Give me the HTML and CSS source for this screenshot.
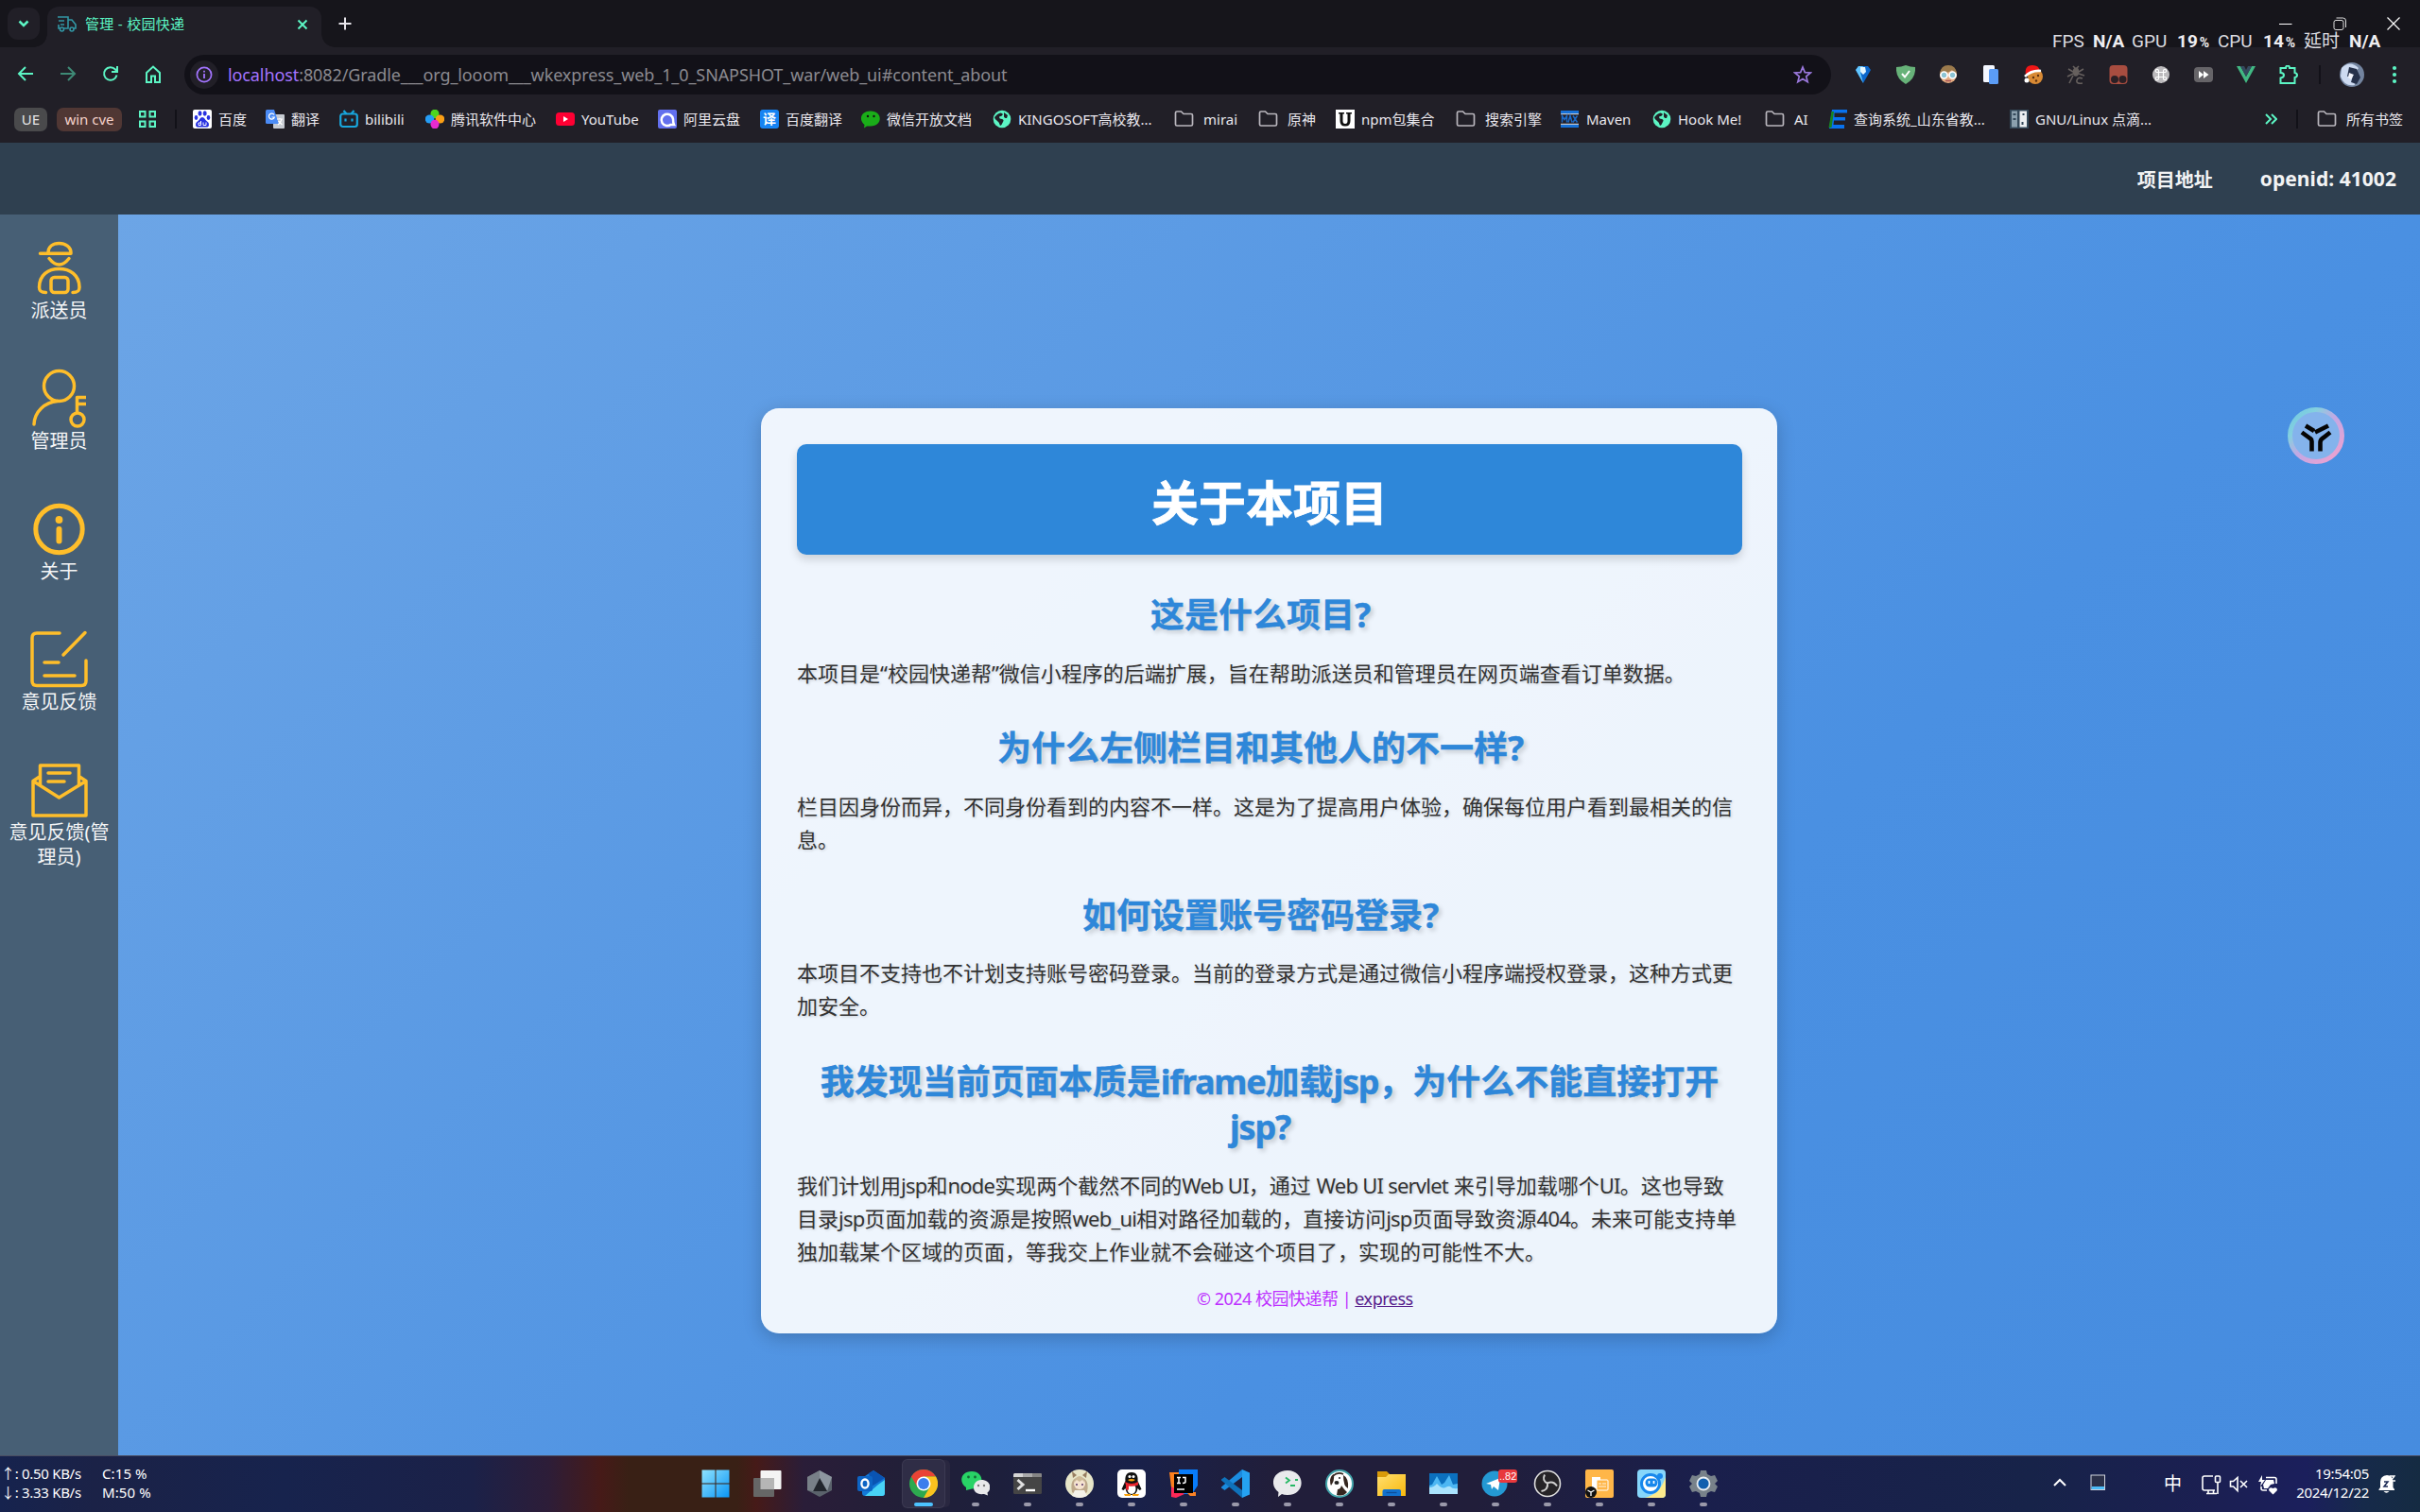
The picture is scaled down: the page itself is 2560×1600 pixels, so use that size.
FILE: index.html
```html
<!DOCTYPE html>
<html lang="zh-CN">
<head>
<meta charset="utf-8">
<title>管理 - 校园快递</title>
<link rel="stylesheet" href="styles.css">
</head>
<body>
<svg class="defs" width="0" height="0">
  <defs>
    <symbol id="folder" viewBox="0 0 21 20"><path d="M1.5 3.5q0-1.5 1.500-1.500h4.500l2.500 2.500h8q1.500 0 1.500 1.500v9.500q0 1.500-1.500 1.500h-15q-1.500 0-1.500-1.500z" fill="none" stroke="#b9b6bd" stroke-width="1.700"/></symbol>
    <symbol id="globe" viewBox="0 0 20 20"><circle cx="10" cy="10" r="9.300" fill="#5cf5c4"/><path d="M5 5q4-3 6 0-1 2-4 2.500 0 2.500 3 2.500 2.500 1 1 3-1 3-3 4-1-4-3-5-3-2-3-4zM12 3l4 3-1 3q-3 0-3-2z" fill="#211f27"/></symbol>
    <linearGradient id="winG" x1="0" y1="0" x2="1" y2="1"><stop offset="0" stop-color="#8fe3ff"/><stop offset="1" stop-color="#0a95f5"/></linearGradient>
    <linearGradient id="ringG" x1="0" y1="0" x2="1" y2="1"><stop offset="0" stop-color="#6fc8e4"/><stop offset=".25" stop-color="#84d0df"/><stop offset=".5" stop-color="#c2a8e4"/><stop offset="1" stop-color="#f5a0cc"/></linearGradient>
    <linearGradient id="foldG" x1="0" y1="0" x2="1" y2="1"><stop offset="0" stop-color="#ffdf70"/><stop offset="1" stop-color="#f8b80c"/></linearGradient>
  </defs>
</svg>

<header class="chrome">
  <div class="tabstrip">
    <button class="tab-search"><svg width="14" height="14" viewBox="0 0 14 14"><path d="M2.500 4.500l4.500 4.500 4.500-4.500" class="mint-line thick"/></svg></button>
    <div class="tab">
      <svg width="21" height="20" viewBox="0 0 21 20" fill="none" stroke="#3297a5" stroke-width="1.600"><path d="M1 2h11v12H7M2 6h6M4 10h4M12 5h4l4 5v4h-2M2 10v4h2"/><circle cx="5.500" cy="15" r="2"/><circle cx="16" cy="15" r="2"/></svg>
      <span class="tab-title">管理 - 校园快递</span>
      <svg class="tab-x" width="12" height="12" viewBox="0 0 12 12"><path d="M1.500 1.500l9 9M10.500 1.500l-9 9" class="mint-line"/></svg>
    </div>
    <svg class="plus" width="14" height="14" viewBox="0 0 14 14"><path d="M7 .5v13M.5 7h13" stroke="#e8e6ec" stroke-width="2"/></svg>
    <div class="winbtns">
      <svg width="14" height="14" viewBox="0 0 14 14"><path d="M0 7.500h13.500" stroke="#fff"/></svg>
      <svg width="14" height="14" viewBox="0 0 14 14" fill="none" stroke="#ddd"><rect x="1" y="3.500" width="10" height="10" rx="2"/><path d="M3.500 1h7q3 0 3 3v7"/></svg>
      <svg width="14" height="14" viewBox="0 0 14 14"><path d="M.5.5l13 13M13.500.5l-13 13" stroke="#fff" stroke-width="1.200"/></svg>
    </div>
  </div>
  <div class="perf"><span>FPS</span><b>N/A</b><span>GPU</span><b>19<i>%</i></b><span>CPU</span><b>14<i>%</i></b><span>延时</span><b>N/A</b></div>

  <div class="toolbar">
    <div class="nav">
      <svg width="18" height="18" viewBox="0 0 18 18"><path d="M17 9H2M9 2L2 9l7 7" class="mint-line"/></svg>
      <svg class="dim" width="18" height="18" viewBox="0 0 18 18"><path d="M1 9h15M9 2l7 7-7 7" class="mint-line"/></svg>
      <svg width="18" height="18" viewBox="0 0 18 18"><path d="M15.500 10.500A6.800 6.800 0 1 1 14 4.500L15.800 6.500M16 1v6h-6" class="mint-line"/></svg>
      <svg width="18" height="20" viewBox="0 0 18 20"><path d="M2 8l7-6.500L16 8v10h-5v-6.500H7V18H2z" class="mint-line"/></svg>
    </div>
    <div class="omnibox">
      <span class="info"><svg width="18" height="18" viewBox="0 0 18 18"><circle cx="9" cy="9" r="7.600" fill="none" stroke="#a374ff" stroke-width="1.700"/><path d="M9 8v5M9 4.800v1.700" stroke="#a374ff" stroke-width="1.800"/></svg></span>
      <span class="url"><em>localhost</em>:8082/Gradle___org_looom___wkexpress_web_1_0_SNAPSHOT_war/web_ui#content_about</span>
      <svg width="20" height="20" viewBox="0 0 20 20"><path d="M10 2l2.300 5.600 6 .4-4.600 3.900 1.500 5.900L10 14.600l-5.200 3.200 1.500-5.900L1.700 8l6-.4z" fill="none" stroke="#9a78dc" stroke-width="1.700"/></svg>
    </div>
    <div class="exts">
      <svg viewBox="0 0 20 20"><path d="M2 5l3-4h10l3 4-8 14z" fill="#0b67cc"/><path d="M2 5l3-4h5l-3 6 3 12z" fill="#62c6ff"/><path d="M7 2h5l1 5-3 3-3-3z" fill="#e5f7ff"/></svg>
      <svg viewBox="0 0 20 20"><path d="M0 2q5 0 10-2 5 2 10 2 1 12-10 18Q-1 14 0 2z" fill="#67b279"/><path d="M6 9l3 3.500L14 6" fill="none" stroke="#fff" stroke-width="2"/></svg>
      <svg viewBox="0 0 20 20"><circle cx="10" cy="10" r="9" fill="#e2aa80"/><path d="M1 9Q2 0 10 0t9 9q-3-1-5-4-5 4-13 4z" fill="#9b7a4c"/><g fill="#8cc4d4" stroke="#fff" stroke-width="1.700"><circle cx="5.500" cy="10.500" r="3.500"/><circle cx="14.500" cy="10.500" r="3.500"/></g><path d="M7 16.500h6" stroke="#a55" stroke-width="1.500"/></svg>
      <svg viewBox="0 0 20 20"><rect x="2" y="0" width="12" height="18" rx="1.500" fill="#f4f7ff"/><rect x="8" y="4" width="10" height="16" rx="1.500" fill="#5b9cf5"/></svg>
      <svg viewBox="0 0 20 20"><circle cx="12" cy="12" r="8" fill="#d98a34"/><path d="M2 11Q0 0 9 0q7 0 8 6-8 0-15 5z" fill="#f01616"/><path d="M1 12Q8 5 18 6" fill="none" stroke="#fff" stroke-width="2.500"/><circle cx="3" cy="16" r="2.500" fill="#fff"/><g fill="#5c3211"><circle cx="10" cy="13" r="1.200"/><circle cx="15" cy="11" r="1.200"/><circle cx="13" cy="16.500" r="1.200"/></g></svg>
      <svg viewBox="0 0 20 20" fill="none" stroke="#66605e" stroke-width="1.600"><ellipse cx="10" cy="7" rx="2.500" ry="4" fill="#66605e"/><path d="M7 1l2 2M13 1l-2 2M2 4l5 3M18 4l-5 3M1 12l6-3M19 11l-6-2M3 19l4-8M17 14q-5-2-6 2t6 3"/></svg>
      <svg viewBox="0 0 20 20"><rect x=".5" width="19" height="20" rx="4" fill="#a84d40"/><g fill="#2b2025"><circle cx="6" cy="15" r="4"/><circle cx="14.500" cy="15" r="4"/></g></svg>
      <svg viewBox="0 0 20 20"><circle cx="10" cy="10" r="9" fill="#bcbabd"/><path d="M7.500 7.500h5v5h-5zM7.500 7.500H6a1.600 1.600 0 1 1 1.500-1.500zM12.500 7.500V6A1.600 1.600 0 1 1 14 7.500zM7.500 12.500V14A1.600 1.600 0 1 1 6 12.500zM12.500 12.500H14A1.600 1.600 0 1 1 12.500 14z" fill="none" stroke="#fff" stroke-width="1.200"/></svg>
      <svg viewBox="0 0 20 20"><rect y="2" width="20" height="16" rx="4" fill="#666468"/><path d="M5 6l5 4-5 4zM10 6l5.500 4-5.500 4z" fill="#fff"/></svg>
      <svg viewBox="0 0 20 20"><path d="M0 1h4l6 11 6-11h4L10 19z" fill="#41b883"/><path d="M4 1h4l2 4 2-4h4l-6 11z" fill="#34495e"/></svg>
      <svg viewBox="0 0 20 20"><path d="M1.500 3h5.500q0-2.500 2-2.500T11 3h5.500v5q2.500.5 2.500 2.500T16.500 13v6h-15v-5.500q3.500-.5 3.500-3T1.500 8z" class="mint-line"/></svg>
    </div>
    <i class="sep"></i>
    <svg class="avatar" width="26" height="26" viewBox="0 0 26 26"><circle cx="13" cy="13" r="13" fill="#73849f"/><path d="M2 6q9-9 18 0l-6 8 2 10q-11 2-15-9z" fill="#cddaf0"/><path d="M10 5l8 2 4 9-4 7-6-2 2-7-6 1z" fill="#26314a"/><path d="M10 11l5 2-3 5-3-2z" fill="#f2f4fb"/></svg>
    <svg class="dots" width="6" height="20" viewBox="0 0 6 20" fill="#5cf5c4"><circle cx="3" cy="3" r="2.100"/><circle cx="3" cy="10" r="2.100"/><circle cx="3" cy="17" r="2.100"/></svg>
  </div>

  <div class="bookmarks">
    <span class="chip ue">UE</span><span class="chip win">win cve</span>
    <svg class="apps" width="18" height="18" viewBox="0 0 18 18"><path d="M1 1h5.500v5.500H1zM11.500 1H17v5.500h-5.500zM1 11.500h5.500V17H1zM11.500 11.500H17V17h-5.500z" class="mint-line"/></svg>
    <i class="sep"></i>
    <div class="marks">
      <span class="bm"><svg viewBox="0 0 20 20"><rect width="20" height="20" rx="2" fill="#fff"/><g fill="#2932e1"><ellipse cx="7.500" cy="4" rx="2" ry="2.700"/><ellipse cx="12.700" cy="4" rx="2" ry="2.700"/><ellipse cx="3.500" cy="8.500" rx="1.800" ry="2.400"/><ellipse cx="16.500" cy="8.500" rx="1.800" ry="2.400"/><path d="M10 8q2 0 3.500 3 3.500 2.500 3.500 5 0 3-4 2.500H7q-4 .5-4-2.500 0-2.500 3.500-5Q8 8 10 8z"/></g><path d="M8.500 12v4.500H6v-2.500h2M11 13.500v3h3v-3" fill="none" stroke="#fff"/></svg>百度</span>
      <span class="bm"><svg viewBox="0 0 20 20"><rect x="8" y="5" width="12" height="15" rx="1" fill="#c7cbd2"/><path d="M1.500 0H9l5 15H1.500Q0 15 0 13.500v-12Q0 0 1.500 0z" fill="#4b8bf5"/><path d="M9 5.500a3 3 0 1 0 .3 2.500H6.500M12 10h6M15 9v1M17 10q-1 4-4 6M13.500 12l4 4" fill="none" stroke="#fff" stroke-width="1.200"/></svg>翻译</span>
      <span class="bm"><svg viewBox="0 0 20 20" fill="none" stroke="#18a6dc" stroke-width="2.200"><rect x="1.200" y="4.500" width="17.600" height="13.500" rx="2.500"/><path d="M4.500 1l3 3.500M15.500 1l-3 3.500M6.500 9.500v3M13.500 9.500v3"/></svg>bilibili</span>
      <span class="bm"><svg viewBox="0 0 20 20"><ellipse cx="10" cy="4.500" rx="4.500" ry="4.800" fill="#4dd61f"/><ellipse cx="4.500" cy="10" rx="4.800" ry="4.500" fill="#259df5"/><ellipse cx="15.500" cy="10" rx="4.800" ry="4.500" fill="#fb9f15"/><ellipse cx="10" cy="15.500" rx="4.500" ry="4.800" fill="#e72bd0"/></svg>腾讯软件中心</span>
      <span class="bm"><svg viewBox="0 0 20 20"><rect y="3" width="20" height="14" rx="3.500" fill="#ff0033"/><path d="M8 7l5 3-5 3z" fill="#fff"/></svg>YouTube</span>
      <span class="bm"><svg viewBox="0 0 20 20"><rect width="20" height="20" rx="2" fill="#6370ee"/><path d="M14 15.500A6.200 6.200 0 1 1 16 10q0 4 1 6h-3.500" fill="none" stroke="#fff" stroke-width="2.500"/></svg>阿里云盘</span>
      <span class="bm"><span class="tile">译</span>百度翻译</span>
      <span class="bm"><svg viewBox="0 0 20 20"><path d="M10 1.500c13 0 13 16 0 16-2 0-3 0-4 0l-3 2 .5-3.500C-3 11-.5 1.500 10 1.500z" fill="#1aad19"/><circle cx="7" cy="7" r="1.200" fill="#111"/><circle cx="13.500" cy="7" r="1.200" fill="#111"/></svg>微信开放文档</span>
      <span class="bm"><svg><use href="#globe"/></svg>KINGOSOFT高校教...</span>
      <span class="bm f"><svg><use href="#folder"/></svg>mirai</span>
      <span class="bm f"><svg><use href="#folder"/></svg>原神</span>
      <span class="bm"><svg viewBox="0 0 20 20"><rect width="20" height="20" fill="#fff"/><path d="M3 3h6v1.500H7.500V12q0 3 2.500 3t2.500-3V4.500H11V3h6v1.500h-1.500V12q0 5.500-5.500 5.500T4.500 12V4.500H3z" fill="#111"/></svg>npm包集合</span>
      <span class="bm f"><svg><use href="#folder"/></svg>搜索引擎</span>
      <span class="bm"><svg viewBox="0 0 20 20"><path d="M0 1h19v3H0zM0 16h19v3H0z" fill="#1671d8"/><path d="M0 4.700h19M0 15.300h19" stroke="#e8f0fa"/><path d="M1.500 13.500v-7l2.500 4 2.500-4v7M8 13.500l2-7 2 7M13 6.500l4.500 7M17.500 6.500l-4.500 7" fill="none" stroke="#1c6ac8" stroke-width="1.500"/></svg>Maven</span>
      <span class="bm"><svg><use href="#globe"/></svg>Hook Me!</span>
      <span class="bm f"><svg><use href="#folder"/></svg>AI</span>
      <span class="bm"><svg viewBox="0 0 20 20"><path d="M4 0h16v3.500H6.500V8H18v3.500H6L5.500 16H17v4H1z" fill="#0872ee"/><path d="M3.500 2L.5 19h3L6 2z" fill="#18831f"/></svg>查询系统_山东省教...</span>
      <span class="bm"><svg viewBox="0 0 20 20"><rect width="20" height="20" fill="#34495a"/><path d="M2 1.500h6v17H2z" fill="#8ba0ae"/><path d="M10.500 1.500H18v17h-7.500z" fill="#eceff2"/><path d="M3.500 5h3M3.500 10h3M13.500 5h2M13.500 13v3" stroke="#34495a" stroke-width="2"/></svg>GNU/Linux 点滴...</span>
    </div>
    <svg class="more" width="13" height="12" viewBox="0 0 13 12"><path d="M1 1l5 5-5 5M7 1l5 5-5 5" class="mint-line"/></svg>
    <i class="sep"></i>
    <span class="bm f all"><svg><use href="#folder"/></svg>所有书签</span>
  </div>
</header>

<div class="topbar"><a>项目地址</a><a class="oid">openid: 41002</a></div>

<div class="app">
  <nav class="side">
    <a><svg viewBox="0 0 63 63"><path d="M20 15.500C20 9 25 5.500 31.500 5.500S44 9 44 15.500M11.500 16.200H44M21 21.500Q31.500 34.500 42 21.500M17.500 57.500C13 57.500 10.500 56.500 10.500 52 10.500 39 20 32.500 31.500 32.500S53 39 53 52C53 56.500 50.500 57.500 46 57.500"/><rect x="23" y="41.500" width="18" height="16" rx="3.500"/></svg><span>派送员</span></a>
    <a><svg viewBox="0 0 63 63"><circle cx="31.500" cy="18.500" r="16"/><path d="M5 59C5.500 46 16 35.500 30 34.500"/><circle cx="51" cy="54" r="7"/><path d="M50.500 47V30.500H60M50.500 37.500H60" stroke-linecap="butt"/></svg><span>管理员</span></a>
    <a><svg viewBox="0 0 63 63"><circle cx="31.500" cy="32" r="24.700" stroke-width="5"/><circle cx="31.500" cy="22" r="3.900" fill="#ffbe2a" stroke="none"/><path d="M31.500 32v12.500" stroke-width="6"/></svg><span>关于</span></a>
    <a><svg viewBox="0 0 63 63"><path d="M32 4H8Q3 4 3 9V54.500Q3 59.500 8 59.500H55Q60 59.500 60 54.500V33M36 27L59 3.500M16 35H31M16 49H48"/></svg><span>意见反馈</span></a>
    <a><svg viewBox="0 0 63 63"><path d="M11.500 17.500L4 22.500V59H60V22.500L52.500 17.500M11.500 27V6H52.500V27M4 22.500L31.500 40 60 22.500M20 14H43M20 23H37"/></svg><span>意见反馈(管理员)</span></a>
  </nav>
  <main>
    <article class="card">
      <h1>关于本项目</h1>
      <h2>这是什么项目<u>?</u></h2>
      <p>本项目是<q>“</q>校园快递帮<q>”</q>微信小程序的后端扩展，旨在帮助派送员和管理员在网页端查看订单数据。</p>
      <h2>为什么左侧栏目和其他人的不一样<u>?</u></h2>
      <p>栏目因身份而异，不同身份看到的内容不一样。这是为了提高用户体验，确保每位用户看到最相关的信<br>息。</p>
      <h2>如何设置账号密码登录<u>?</u></h2>
      <p>本项目不支持也不计划支持账号密码登录。当前的登录方式是通过微信小程序端授权登录，这种方式更<br>加安全。</p>
      <h2>我发现当前页面本质是<s>iframe</s>加载<s>jsp</s>，为什么不能直接打开<br><s>jsp</s><u>?</u></h2>
      <p>我们计划用<s>jsp</s>和<s>node</s>实现两个截然不同的<s>Web UI</s>，通过 <s>Web UI servlet</s> 来引导加载哪个<s>UI</s>。这也导致<br>目录<s>jsp</s>页面加载的资源是按照<s>web_ui</s>相对路径加载的，直接访问<s>jsp</s>页面导致资源<s>404</s>。未来可能支持单<br>独加载某个区域的页面，等我交上作业就不会碰这个项目了，实现的可能性不大。</p>
      <footer>© 2024 校园快递帮 | <a>express</a></footer>
    </article>
    <svg class="bubble" width="60" height="60" viewBox="0 0 60 60"><circle cx="30" cy="30" r="27.500" fill="#84b3ec" stroke="url(#ringG)" stroke-width="5"/><path d="M19 19.500l9 5.500M43 19.500L29 26.500M15 26.500l9 6.500q1.500 1 1.500 3v10.500M45 26.500l-7 5.500q-3.500 2-3.500 5v9.500" fill="none" stroke="#050505" stroke-width="4.600"/></svg>
  </main>
</div>

<div class="taskbar">
  <div class="stats"><span>↑: 0.50 KB/s</span><span>C:15 %</span><span>↓: 3.33 KB/s</span><span>M:50 %</span></div>
  <div class="dock">
    <span><svg viewBox="0 0 30 30"><path d="M.5.500h14v14H.5zM15.500.500h14v14h-14zM.5 15.500h14v14H.5zM15.500 15.500h14v14h-14z" fill="url(#winG)"/></svg></span>
    <span><svg viewBox="0 0 30 30"><rect x="7.500" y="1" width="22" height="20" rx="1" fill="#f4f4f4"/><rect y="9" width="22" height="20" rx="1" fill="#666"/><rect x="7.500" y="9" width="14.500" height="12" fill="#b5b5b5"/></svg></span>
    <span><svg viewBox="0 0 30 30"><path d="M15 1l13 7v14l-13 7L2 22V8z" fill="#5a626b"/><path d="M15 1l13 7-5 15-8-14z" fill="#8d969f"/><path d="M15 9l8 14H8z" fill="#22262d"/><path d="M15 1v8L8 23l-6-1V8z" fill="#788088"/></svg></span>
    <span><svg viewBox="0 0 30 30"><path d="M5 9L17 1l12 8v16q0 3-3 3H8q-3 0-3-3z" fill="#1379d8"/><path d="M29 11v14q0 3-3 3H8l14-12z" fill="#48d3f6"/><path d="M12 4l5-3 12 8-14 9z" fill="#0a54b3"/><rect y="7" width="16" height="16" rx="2" fill="#0d64c4"/><ellipse cx="8" cy="15" rx="3.600" ry="4.500" fill="none" stroke="#fff" stroke-width="2.300"/></svg></span>
    <span class="active"><svg viewBox="0 0 30 30"><circle cx="15" cy="15" r="15" fill="#2da94f"/><path d="M15 0a15 15 0 0 1 13 7.500H15L8.500 18.700 2 7.500A15 15 0 0 1 15 0z" fill="#ea4335"/><path d="M28 7.500A15 15 0 0 1 15 30l6.500-11.200L15 7.500z" fill="#fcc31e"/><circle cx="15" cy="15" r="7.500" fill="#fff"/><circle cx="15" cy="15" r="5.900" fill="#3b7ded"/></svg></span>
    <span class="run"><svg viewBox="0 0 30 30"><path d="M11 2c14 0 14 19 0 18.500L5 22l0-3C-3 14-1 2 11 2z" fill="#28d366"/><path d="M21 11c11 0 11 11 6.500 13.500l.5 3-4-1.500c-8 1-11-3-11-7s3-8 8-8z" fill="#e9e9eb"/><g fill="#136a35"><circle cx="7.500" cy="8" r="1.400"/><circle cx="14.500" cy="8" r="1.400"/></g><g fill="#777"><circle cx="18" cy="17" r="1.200"/><circle cx="24" cy="17" r="1.200"/></g></svg></span>
    <span class="run"><svg viewBox="0 0 30 30"><rect y="4" width="30" height="22" rx="1.500" fill="#454545"/><path d="M0 8V5.500Q0 4 1.500 4H20v4z" fill="#d5d5d5"/><path d="M10 4h10v4H10z" fill="#aaa"/><path d="M20 4h9q1 0 1 1v3H20z" fill="#858585"/><path d="M4.500 11l5.500 5-5.500 5" fill="none" stroke="#e0e0e0" stroke-width="3"/><path d="M13 22h10" stroke="#fff" stroke-width="2.400"/></svg></span>
    <span class="run"><svg viewBox="0 0 30 30"><circle cx="15" cy="15" r="15" fill="#e7e6c9"/><path d="M7 24q-3-15 8-16 11 1 8 16l-8 6z" fill="#bea98b"/><path d="M8 9l-1-7 5 4M22 9l1-7-5 4" fill="#977e60"/><ellipse cx="15" cy="15" rx="6" ry="6" fill="#f5e3d0"/><path d="M9 14q2-7 6-7t6 7l-3-3-3 2-3-2z" fill="#cdbb98"/><circle cx="12" cy="16" r="1" fill="#536"/><circle cx="18" cy="16" r="1" fill="#536"/><path d="M10 22h10l3 6q-8 4-16 0z" fill="#f4f2e9"/></svg></span>
    <span class="run"><svg viewBox="0 0 30 30"><rect width="30" height="30" rx="5" fill="#fff"/><path d="M15 3c6 0 7 5 6.500 9l4 9-2 1-2-2q-1 7-6.500 7t-6.500-7l-2 2-2-1 4-9C8 8 9 3 15 3z" fill="#111"/><path d="M15 15c6 0 6 11 0 11s-6-11 0-11z" fill="#fff"/><path d="M8 13q7 4 14 0v3.500q-5 2-10 1v4H9v-5z" fill="#e8232c"/><path d="M11 11q4-2 8 0-4 3-8 0zM7 26h7v2H8zM16 26h7l-1 2h-6z" fill="#fba20c"/><circle cx="13" cy="7.500" r="1.500" fill="#fff"/><circle cx="17" cy="7.500" r="1.500" fill="#fff"/></svg></span>
    <span class="run"><svg viewBox="0 0 30 30"><path d="M10 0h20v17l-6 9H10z" fill="#087cfa"/><path d="M0 3h10v18L3 27z" fill="#fc801d"/><path d="M2 18l14 8-9 4-5-1z" fill="#fe2857"/><path d="M18 24h10v4h-6z" fill="#fd8224"/><rect x="5" y="5" width="20" height="20" fill="#000"/><path d="M8 8.500h4M10 8.500v6M8 14.500h4M14 8.500h3v4.500q0 1.500-3 1.500M8 21h8" fill="none" stroke="#fff" stroke-width="1.500"/></svg></span>
    <span class="run"><svg viewBox="0 0 30 30"><path d="M22 0l8 3.500v23L22 30z" fill="#25a2f2"/><path d="M22 0v8L3.500 22 0 19.500v-1z" fill="#1b8ce0"/><path d="M22 30v-8L3.500 8 0 10.500v1z" fill="#0f72bb"/></svg></span>
    <span class="run"><svg viewBox="0 0 30 30"><path d="M15 1c19 0 20 26 0 26q-4 0-6-1l-4 3 .5-5C-5 16 0 1 15 1z" fill="#e9eaec"/><path d="M13 8.500l4 3-4 3M18 17h5M23 11h3" fill="none" stroke="#25b864" stroke-width="1.800"/></svg></span>
    <span class="run"><svg viewBox="0 0 30 30"><circle cx="15" cy="15" r="14" fill="#fff" stroke="#43a5ab" stroke-width="2"/><path d="M5 11q1-5 4-6 1 7-3 12-1-2-1-6zM19 6q6 3 5 14-5-2-5-14zM12 27l1-6q3 0 4-4l3 4 3 3q-4 5-11 3z" fill="#35261f"/><path d="M8 7q5-5 11-2" fill="none" stroke="#35261f" stroke-width="1.500"/><ellipse cx="12" cy="14" rx="2.500" ry="2" fill="#222"/><circle cx="15" cy="9" r="1" fill="#222"/></svg></span>
    <span class="run"><svg viewBox="0 0 30 30"><path d="M0 2h10l3 3-3 4H0z" fill="#d99a09"/><path d="M0 8h9l3-3h18v23H0z" fill="url(#foldG)"/><path d="M5.500 28v-5q0-2 2-2H23q2 0 2 2v5z" fill="#1272ce"/><path d="M9.500 24.500h11" stroke="#0d4d96" stroke-width="1.200"/></svg></span>
    <span class="run"><svg viewBox="0 0 30 30"><rect y="4" width="30" height="22" fill="#0b70be"/><path d="M0 17l3-1 5-9 5 9 3-2 5-8 4 10 5-1v11H0z" fill="#4db7f3"/><path d="M0 19q5 0 8-4 5 6 9 4t5-1q3 3 8 2v6H0z" fill="#aae3fd"/></svg></span>
    <span class="run"><svg viewBox="0 0 30 30"><circle cx="14" cy="15" r="13.500" fill="#2499d3"/><path d="M5 15l15-6-2 13-5-4-2 3-1-5z" fill="#fff"/></svg><b class="badge">..82</b></span>
    <span class="run"><svg viewBox="0 0 30 30"><circle cx="15" cy="15" r="13.500" fill="#252327" stroke="#dedede" stroke-width="1.600"/><path d="M15 14.500Q9 12 12 5.500M15 14.500q6-3 10 3M15 14.500q1 7-6.500 8.500" fill="none" stroke="#cfcfcf" stroke-width="2"/></svg></span>
    <span class="run"><svg viewBox="0 0 30 30"><rect width="30" height="30" rx="2" fill="#ffb648"/><rect x="7" y="8" width="9" height="12" fill="#fff"/><rect x="12" y="11" width="12" height="11" rx="1" fill="#ffb648" stroke="#fff"/><path d="M14 15h3M18 15h4M14 18h8" stroke="#ffdfae" stroke-width="1.400"/><circle cx="6" cy="24" r="6" fill="#111"/><path d="M2.500 22L6 24l3.500-2M6 24v4" stroke="#fff" fill="none" stroke-width="1.300"/></svg></span>
    <span class="run"><svg viewBox="0 0 30 30"><rect width="30" height="30" rx="4" fill="#86d6fb"/><path d="M30 8v18q0 4-4 4H8q16-4 22-22z" fill="#fdea8c"/><circle cx="14" cy="15" r="9.500" fill="#fff" stroke="#1787ec" stroke-width="3"/><rect x="8.500" y="9.500" width="13" height="9" rx="4.500" fill="#1787ec"/><path d="M12.500 12v3M17.500 12v3" stroke="#fff" stroke-width="1.700"/><circle cx="24" cy="7" r="3" fill="#1787ec"/></svg></span>
    <span class="run"><svg viewBox="0 0 30 30"><path d="M12 1h6l1 4 4 2 4-1 3 6-3 3 3 3-3 6-4-1-4 2-1 4h-6l-1-4-4-2-4 1-3-6 3-3-3-3 3-6 4 1 4-2z" fill="#78828a"/><circle cx="15" cy="15" r="6.500" fill="#105fae" stroke="#e9eef2" stroke-width="1.800"/></svg></span>
  </div>
  <div class="tray">
    <svg style="--x:2170px" width="18" height="18" viewBox="0 0 18 18"><path d="M3 12l6-6 6 6" class="wl"/></svg>
    <svg style="--x:2211px" width="17" height="18" viewBox="0 0 17 18"><rect x="1" y="1" width="14.500" height="15.500" fill="#2b3048" stroke="#cfd3dc"/><path d="M1.500 14.500h13.500" stroke="#4cbcf7" stroke-width="3"/></svg>
    <span class="ime">中</span>
    <svg style="--x:2328px" width="22" height="22" viewBox="0 0 22 22"><path d="M13 2H4Q2 2 2 4v11q0 2 2 2h11M6 20.500h11M8 17v3M13.500 17v3M18 9v12" class="wl s"/><rect x="15.500" y="2" width="5" height="6.500" rx="1" class="wl s"/></svg>
    <svg style="--x:2358px" width="20" height="20" viewBox="0 0 20 20"><path d="M1.500 7.500H4.500L9 3.500v14L4.500 13H1.500zM12 7l7 7M19 7l-7 7" class="wl s"/></svg>
    <svg style="--x:2389px" width="21" height="22" viewBox="0 0 21 22"><path d="M4 1L0 8h3l-1 5 5-7H4z" fill="#fff"/><path d="M8 3.500h9q2 0 2 2V10M3 13v2q0 2 2 2h4" class="wl s"/><path d="M8 6h8l1 4-4 1-3 4H6l-1-4z" fill="#fff"/><path d="M15.500 21.500l-4.500-4.500q0-4 4.500-2 4.500-2 4.500 2z" fill="#fff"/></svg>
    <div class="clock">19:54:05<br>2024/12/22</div>
    <svg style="--x:2516px" width="18" height="20" viewBox="0 0 18 20"><path d="M2 14V8q0-6 7-7 6 0 6.500 7v6l1.500 2v1H.5v-1zM5.500 18h6q-3 3.500-6 0z" fill="#fff"/><path d="M6 8h4l-4 5h4" fill="none" stroke="#1b2a55" stroke-width="1.500"/><path d="M12 2h5l-4 5h5" fill="none" stroke="#fff" stroke-width="1.400"/></svg>
  </div>
</div>
</body>
</html>
```
FILE: styles.css
```css
* { box-sizing: border-box; }
body {
  margin: 0;
  width: 2560px;
  height: 1600px;
  overflow: hidden;
  font-family: "Noto Sans", "Noto Sans CJK SC", sans-serif;
  display: flex;
  flex-direction: column;
  background: #16151b;
}
svg { display: block; flex: none; }
.defs { position: absolute; }
.mint-line { fill: none; stroke: #5cf5c4; stroke-width: 2; }
.thick { stroke-width: 2.500; }

/* browser frame */
.chrome { height: 151px; background: #211f27; position: relative; color: #e9e7ed; }
.tabstrip { height: 50px; background: #16151b; display: flex; align-items: center; padding-left: 8px; }
.tab-search { width: 34px; height: 34px; border: 0; border-radius: 11px; background: #211f27; padding: 0 0 0 10px; }
.tab {
  margin-left: 8px; width: 290px; height: 43px; align-self: flex-end; background: #211f27;
  border-radius: 12px 12px 0 0; display: flex; align-items: center; padding: 0 14px 6px 10px; position: relative;
}
.tab::before, .tab::after {
  content: ""; position: absolute; bottom: 0; width: 14px; height: 14px;
}
.tab::before { left: -14px; background: radial-gradient(circle at 0 0, transparent 13.500px, #211f27 14px); }
.tab::after { right: -14px; background: radial-gradient(circle at 100% 0, transparent 13.500px, #211f27 14px); }
.tab-title { margin-left: 9px; font-size: 15px; line-height: 22px; letter-spacing: .3px; color: #5cf5c4; flex: 1; white-space: nowrap; padding-bottom: 1px; }
.plus { margin-left: 18px; }
.winbtns { margin-left: auto; display: flex; gap: 43px; padding-right: 21px; }
.perf {
  position: absolute; right: 42px; top: 31px; height: 24px; line-height: 26px; font-size: 19px;
  display: grid; grid-template-columns: 43px 41px 48px 43px 48px 43px 48px 33px;
  font-family: Roboto, "Noto Sans CJK SC", sans-serif; z-index: 2; white-space: nowrap; color: #dddce0;
}
.perf b { color: #efeef1; }
.perf i { font-style: normal; font-size: 14px; margin-left: 2px; }

.toolbar { height: 57px; display: flex; align-items: center; padding-left: 18px; }
.nav { display: flex; gap: 27px; width: 177px; }
.dim { opacity: .5; }
.omnibox { width: 1742px; height: 42px; border-radius: 21px; background: #121118; display: flex; align-items: center; padding: 0 20px 0 6px; }
.info { width: 30px; height: 30px; border-radius: 50%; background: #211f27; display: grid; place-items: center; }
.url { margin-left: 10px; flex: 1; font-size: 18px; letter-spacing: -.1px; color: #8b8a90; }
.url em { font-style: normal; color: #a374ff; }
.exts { display: flex; gap: 25px; margin-left: 24px; }
.exts svg { width: 20px; height: 20px; }
.sep { width: 2px; height: 20px; background: #121118; flex: none; }
.toolbar .sep { margin-left: 22px; }
.avatar { margin-left: 20px; }
.dots { margin-left: 29px; }

.bookmarks { height: 38px; display: flex; align-items: center; padding-left: 15px; font-size: 15px; white-space: nowrap; }
.chip { height: 25px; border-radius: 7px; text-align: center; line-height: 25px; }
.ue { width: 35px; background: #4a4a4c; color: #e5e5e6; }
.win { width: 69px; margin-left: 10px; background: #503734; color: #f5d2cb; }
.apps { margin-left: 18px; }
.bookmarks .sep { margin-left: 20px; }
.marks {
  margin-left: 17px; width: 2192px; display: grid;
  grid-template-columns: 77px 78px 91px 138px 108px 108px 107px 139px 192px 89px 82px 127px 111px 97px 119px 67px 192px 166px;
}
.bm { display: flex; align-items: center; gap: 7px; height: 22px; line-height: 20px; }
.bm svg, .tile { width: 20px; height: 20px; flex: none; }
.bm.f { gap: 10px; }
.bm.f svg { width: 21px; }
.tile { background: #1683f2; border-radius: 3px; color: #fff; font-size: 14px; line-height: 19px; text-align: center; font-weight: 700; }
.bookmarks .all { margin-left: 20px; }

/* application header */
.topbar { height: 76px; background: #2f4050; color: #f2f3f4; font-weight: 700; font-size: 20px; display: flex; justify-content: flex-end; align-items: center; gap: 50px; padding-right: 25px; }
.oid { font-size: 21px; letter-spacing: .05px; }
.app { height: 1313px; display: flex; }
.side { width: 125px; background: #475f75; padding-top: 25px; display: flex; flex-direction: column; gap: 49px; }
.side a { display: flex; flex-direction: column; align-items: center; color: #f4f5f6; }
.side svg { width: 63px; height: 63px; fill: none; stroke: #ffbe2a; stroke-width: 3.500; stroke-linecap: round; stroke-linejoin: round; }
.side span { font-size: 20px; line-height: 26px; text-align: center; width: 113px; padding-top: 1px; margin-bottom: -1px; }
main { flex: 1; background: linear-gradient(135deg, #6ca5e6, #4a90e2 65%, #468cdf); padding: 205px 0 0 680px; position: relative; }
.card { width: 1075px; height: 979px; border-radius: 19px; background: rgba(255, 255, 255, .9); box-shadow: 0 5px 19px rgba(0, 0, 0, .2); padding: 38px 37px 0 38px; }
h1 { margin: 0 0 40px; height: 117px; border-radius: 10px; background: #2e87d9; color: #fff; font-size: 50px; line-height: 124px; text-align: center; box-shadow: 0 5px 10px rgba(0, 0, 0, .15); -webkit-text-stroke: .8px #fff; }
h2 { margin: 38.500px 0 19.500px; color: #2e87d9; font-size: 36px; line-height: 48px; text-align: center; text-shadow: 3px 3px 5px rgba(0, 0, 0, .18); white-space: nowrap; -webkit-text-stroke: .4px #2e87d9; }
h2 u { display: inline-block; width: 36px; text-align: left; text-decoration: none; }
p { margin: 0; font-size: 22px; line-height: 35.200px; color: #333; text-shadow: 1px 1px 3px rgba(0, 0, 0, .18); white-space: nowrap; }
s { text-decoration: none; letter-spacing: -.035em; }
q { quotes: none; }
q::before, q::after { content: none; }
footer { margin: 19px 0 0 423px; font-size: 18px; line-height: 26px; color: #bd2fff; letter-spacing: -.5px; white-space: nowrap; }
footer a { color: #551a8b; text-decoration: underline; }
.bubble { position: absolute; left: 2295px; top: 204px; }

/* system taskbar */
.taskbar {
  height: 60px; position: relative; border-top: 1px solid #4a4d62; color: #fff; font-size: 15px;
  background: linear-gradient(90deg, #16234e 0, #1b2247 100px, #17234d 300px, #1b2148 500px, #2d1d38 580px, #461a18 635px, #392015 665px, #392015 780px, #461a18 800px, #2a1d38 850px, #211f38 960px, #1d1f3c 1060px, #19214a 1200px, #211e3a 1350px, #211e3a 1560px, #1a1f4c 1800px, #172349 2150px, #1b1f52 2340px, #1b1f5c 2440px, #162a4a 2500px, #152b42 2560px);
}
.stats { position: absolute; left: 1px; top: 8px; display: grid; grid-template-columns: 107px 80px; line-height: 20px; letter-spacing: -.3px; white-space: nowrap; }
.stats span:nth-child(even) { letter-spacing: .1px; }
.dock { display: flex; margin-left: 732px; padding-top: 4px; gap: 5px; }
.dock span { width: 50px; height: 50px; padding: 10px; position: relative; }
.dock svg { width: 30px; height: 30px; }
.badge { position: absolute; left: 28px; top: 10px; height: 14px; padding: 0 1px; border-radius: 3px; background: #e8393d; font: 11px/14px "Liberation Sans", sans-serif; }
.dock .run::after, .dock .active::after { content: ""; position: absolute; left: 21px; bottom: 1px; width: 8px; height: 4px; border-radius: 2px; background: #9a99aa; }
.dock .active { background: #2f2d46; border-radius: 5px; box-shadow: 0 0 0 1px #3c3a52, 6px 0 0 0 #292740; width: 44px; margin: 0 3px; padding: 10px 7px; }
.dock .active::after { left: 12px; width: 20px; background: #4cc2ff; }
.tray { position: absolute; inset: 0 0 auto auto; width: 0; height: 59px; }
.tray svg { position: absolute; left: calc(var(--x) - 2560px); top: 19px; }
.wl { fill: none; stroke: #fff; stroke-width: 2; }
.s { stroke-width: 1.600; }
.ime { position: absolute; left: -271px; top: 16px; font-size: 19px; line-height: 26px; }
.clock { position: absolute; right: 54px; top: 8px; text-align: right; line-height: 20px; font-size: 15px; letter-spacing: -.3px; white-space: nowrap; }
```
